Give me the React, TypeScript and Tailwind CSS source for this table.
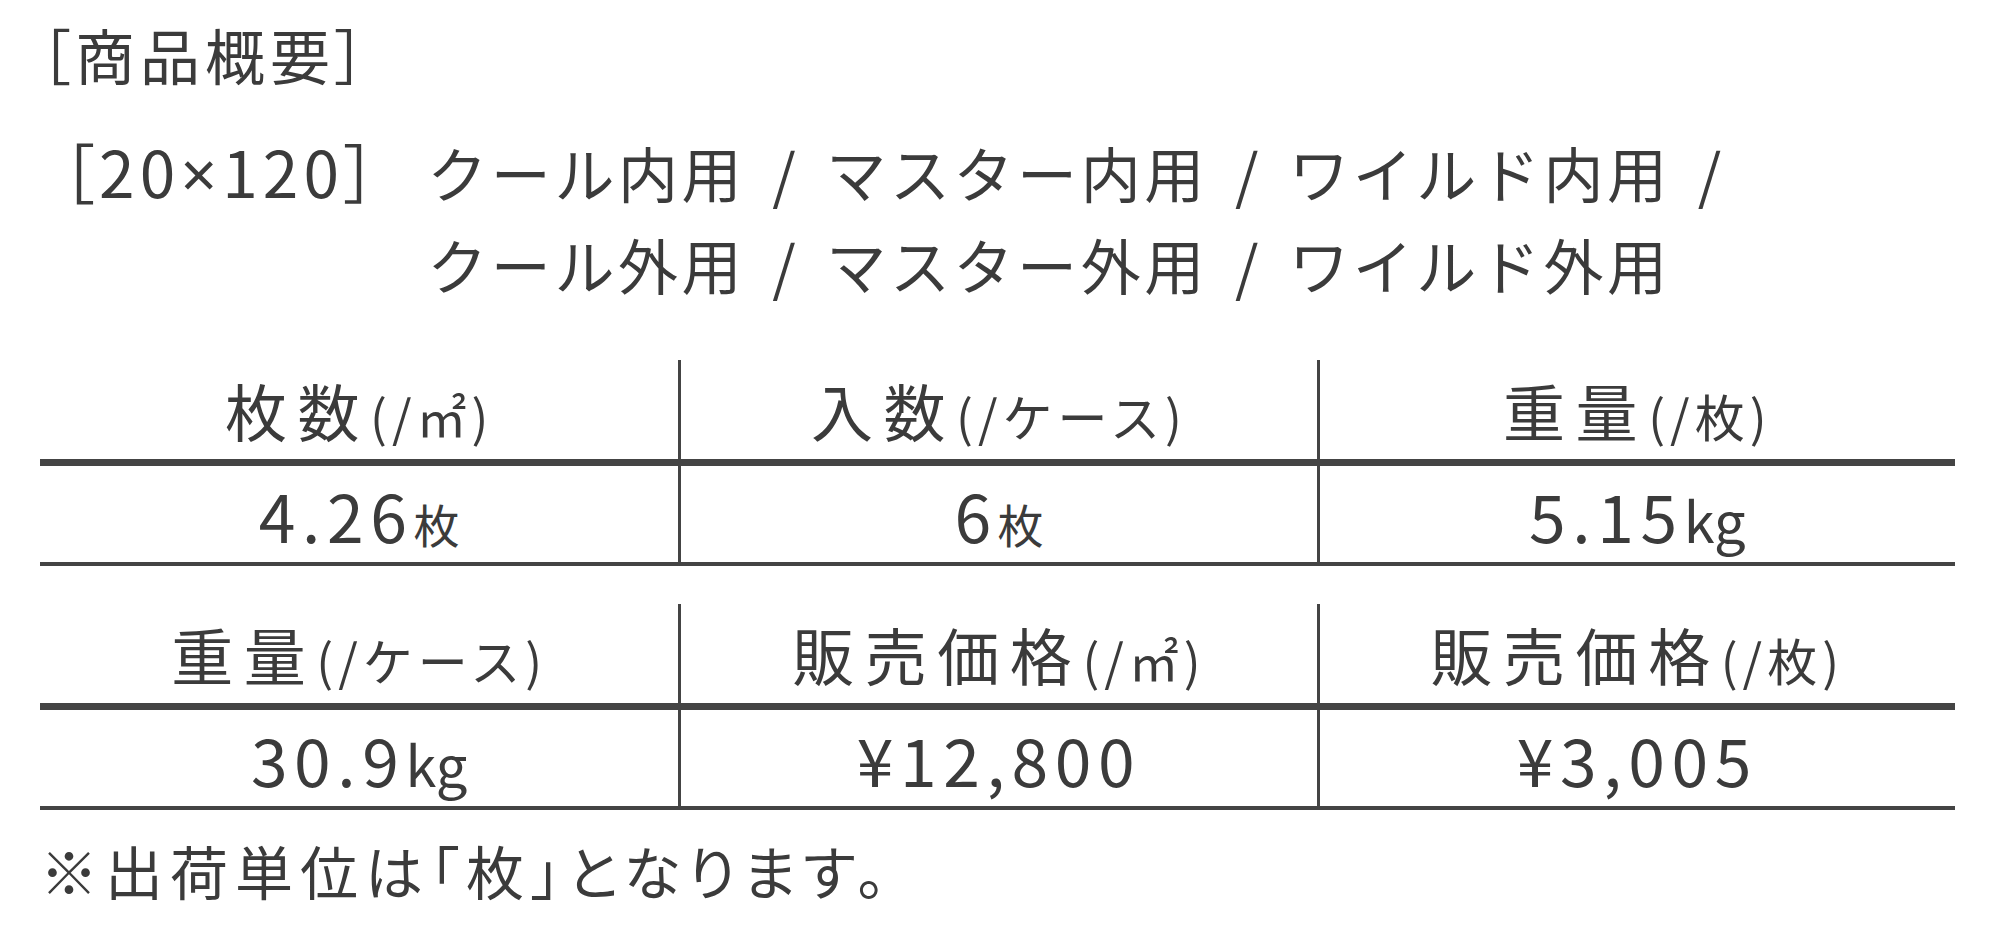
import React from "react";

type Cell = { head: string; headSub: string; value: string; unit?: string; unitKind?: "kanji" | "latin" };

const rowA: Cell[] = [
  { head: "枚数", headSub: "(/㎡)", value: "4.26", unit: "枚", unitKind: "kanji" },
  { head: "入数", headSub: "(/ケース)", value: "6", unit: "枚", unitKind: "kanji" },
  { head: "重量", headSub: "(/枚)", value: "5.15", unit: "kg", unitKind: "latin" },
];

const rowB: Cell[] = [
  { head: "重量", headSub: "(/ケース)", value: "30.9", unit: "kg", unitKind: "latin" },
  { head: "販売価格", headSub: "(/㎡)", value: "¥12,800" },
  { head: "販売価格", headSub: "(/枚)", value: "¥3,005" },
];

const SpecTable = ({ cells, className = "" }: { cells: Cell[]; className?: string }) => (
  <div className={`grid grid-cols-3 ${className}`}>
    {cells.map((c, i) => (
      <div key={i} className={`flex flex-col ${i > 0 ? "border-l-[3px] border-[#444]" : ""}`}>
        <div className="flex h-[99px] items-center justify-center">
          <p className="leading-none whitespace-nowrap">
            <span className="text-[62px] tracking-[0.17em]">{c.head}</span>
            <span className="text-[50px] tracking-[0.1em]">{c.headSub}</span>
          </p>
        </div>
        <div className="h-[7px] bg-[#444]" />
        <div className="flex h-[96px] items-center justify-center">
          <p className="leading-none whitespace-nowrap">
            <span className="text-[66px] tracking-[0.1em]">{c.value}</span>
            {c.unit && (
              <span className={c.unitKind === "kanji" ? "text-[46px]" : "text-[56px]"}>{c.unit}</span>
            )}
          </p>
        </div>
        <div className="h-[4px] bg-[#444]" />
      </div>
    ))}
  </div>
);

export default function App() {
  return (
    <div className="h-[933px] w-[1999px] overflow-hidden bg-white font-['Noto_Sans_CJK_JP','Noto_Sans',sans-serif] text-[#3b3b3b]">
      <div className="pl-[40px] pr-[44px] pt-[18px]">
        <h2 className="text-[60px] leading-[72px] tracking-[5px] [font-feature-settings:'palt']">［商品概要］</h2>

        <div className="mt-[34px] flex items-baseline pl-[22px] leading-[92px]">
          <span className="shrink-0 text-[64px] tracking-[0.08em] [font-feature-settings:'palt']">
            ［20<span className="font-['Noto_Sans',sans-serif]">×</span>120］
          </span>
          <div className="ml-[46px] text-[60px] tracking-[0.06em]">
            <p>
              クール内用<span className="mx-[27px]">/</span>マスター内用<span className="mx-[27px]">/</span>ワイルド内用<span className="mx-[27px]">/</span>
            </p>
            <p>
              クール外用<span className="mx-[27px]">/</span>マスター外用<span className="mx-[27px]">/</span>ワイルド外用
            </p>
          </div>
        </div>

        <SpecTable cells={rowA} className="mt-[50px]" />
        <SpecTable cells={rowB} className="mt-[38px]" />

        <p className="mt-[24px] text-[58px] leading-[72px] tracking-[7px] [font-feature-settings:'palt']">
          ※出荷単位は「枚」となります。
        </p>
      </div>
    </div>
  );
}
